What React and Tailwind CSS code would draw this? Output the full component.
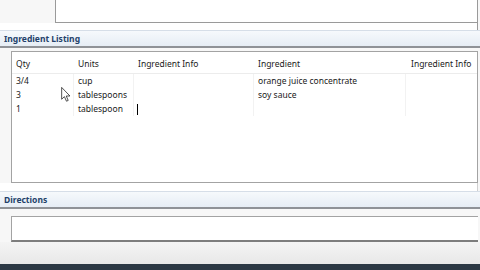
const rows = [
  { qty: '3/4', units: 'cup', ingredient: 'orange juice concentrate' },
  { qty: '3', units: 'tablespoons', ingredient: 'soy sauce' },
  { qty: '1', units: 'tablespoon', ingredient: '' },
];

const cols = 'grid grid-cols-[62px_60px_120px_152px_1fr]';

function SectionBar({ title }) {
  return (
    <div className="h-[18px] shrink-0 flex items-center pl-[4px] pt-[1px] border-t border-[#d6dee8] border-b-2 border-b-[#8f9297] bg-gradient-to-b from-[#f6f9fc] to-[#e6edf5]">
      <span className="text-[8.5px] font-bold text-[#23416a]">{title}</span>
    </div>
  );
}

function Pointer() {
  return (
    <svg width="10" height="15" viewBox="0 0 12 19" className="absolute left-[49px] top-[35px]">
      <path d="M0.5 0.5 L0.5 15.5 L4 12.2 L6.6 18 L8.8 17 L6.3 11.4 L11 11.4 Z" fill="#fff" stroke="#222" strokeWidth="1" strokeLinejoin="round" />
    </svg>
  );
}

export default function App() {
  return (
    <div className="w-[480px] h-[270px] overflow-hidden flex flex-col bg-[#f7f7f7] font-['Noto_Sans',sans-serif] text-[#1a1a1a]">
      <div className="h-[23px] pl-[55px] pr-[2px] shrink-0">
        <div className="h-full bg-white border-l border-b border-r border-[#9a9a9a]" />
      </div>
      <div className="h-[7px] shrink-0 bg-white border-r border-[#9a9a9a] mr-[2px]" />
      <SectionBar title="Ingredient Listing" />

      <div className="pl-[11px] pr-[2px] pt-[3px] shrink-0">
        <div className="relative h-[132px] bg-white border border-[#a3a3a3] text-[8.5px]">
          <div className={`${cols} h-[22px] items-center pt-[3px] border-b border-[#ececec]`}>
            <div className="pl-[4px]">Qty</div>
            <div className="pl-[4px]">Units</div>
            <div className="pl-[4px]">Ingredient Info</div>
            <div className="pl-[4px]">Ingredient</div>
            <div className="pl-[5px]">Ingredient Info</div>
          </div>
          {rows.map((r) => (
            <div key={r.qty + r.units} className={`${cols} h-[14px] items-center`}>
              <div className="pl-[4px] border-r border-[#f2f2f2] h-full flex items-center">{r.qty}</div>
              <div className="pl-[4px] border-r border-[#f2f2f2] h-full flex items-center">{r.units}</div>
              <div className="pl-[4px] border-r border-[#f2f2f2] h-full flex items-center">
                {r.units === 'tablespoon' && <span className="w-px h-[11px] bg-black ml-[-1px]" />}
              </div>
              <div className="pl-[4px] border-r border-[#f2f2f2] h-full flex items-center">{r.ingredient}</div>
              <div />
            </div>
          ))}
          <Pointer />
        </div>
      </div>

      <div className="h-[8px] shrink-0 bg-white border-r border-[#d0d0d0] mr-[2px]" />
      <SectionBar title="Directions" />

      <div className="pl-[11px] pr-[2px] pt-[7px] shrink-0">
        <div className="h-[26px] bg-white border-t border-l border-[#a3a3a3] border-b-2 border-b-[#7d7d7d]" />
      </div>
      <div className="h-[22px] shrink-0 bg-gradient-to-b from-[#f4f4f4] to-[#e8e8e8]" />
      <div className="flex-1 bg-[#2c3844]" />
    </div>
  );
}
